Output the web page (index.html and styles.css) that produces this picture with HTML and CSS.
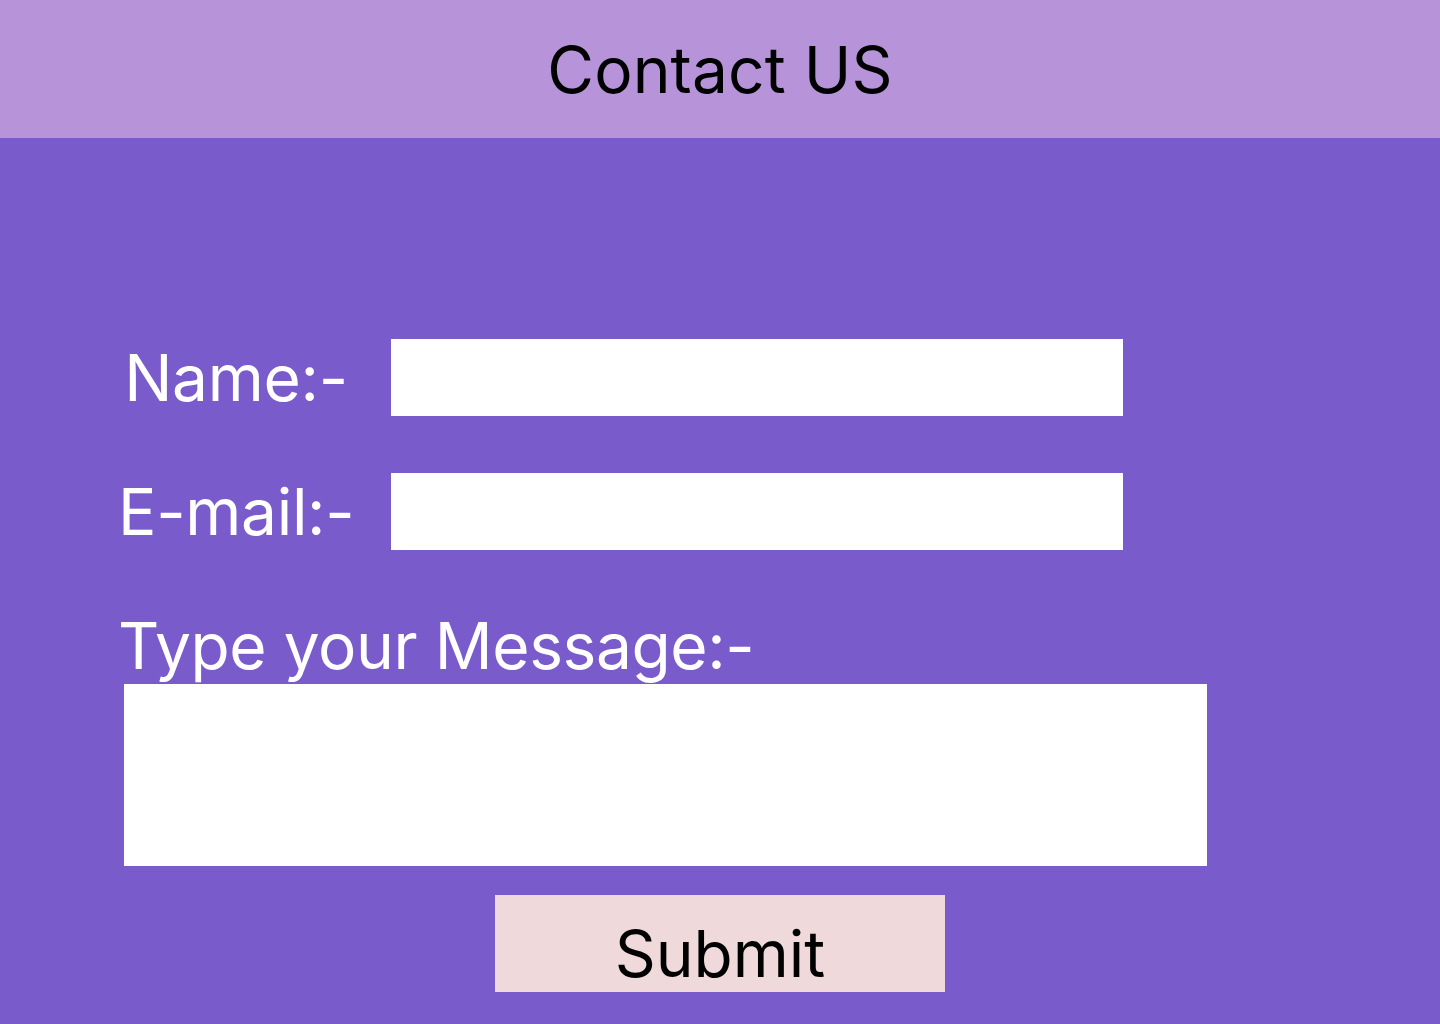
FILE: index.html
```html
<!DOCTYPE html>
<html lang="en">
<head>
<meta charset="utf-8">
<title>Contact US</title>
<link rel="stylesheet" href="styles.css">
</head>
<body>
<header class="top-bar">
  <h1 class="title">Contact US</h1>
</header>
<main class="contact">
  <form class="contact-form" onsubmit="return false;">
    <div class="fields">
      <label class="field-label" for="name">Name:-</label>
      <input class="field-input" id="name" type="text">
      <label class="field-label" for="email">E-mail:-</label>
      <input class="field-input" id="email" type="email">
    </div>
    <label class="message-label" for="msg">Type your Message:-</label>
    <textarea class="message-box" id="msg"></textarea>
    <button class="submit-btn" type="submit">Submit</button>
  </form>
</main>
</body>
</html>
```

FILE: styles.css
```css
html, body {
  margin: 0;
  padding: 0;
}
body {
  background: #7a5bcb;
  font-family: Inter, "Noto Sans", sans-serif;
  min-height: 1024px;
}
.top-bar {
  background: #b794d9;
  height: 138px;
  box-sizing: border-box;
  padding-top: 31px;
}
.title {
  margin: 0;
  font-size: 64px;
  font-weight: 400;
  line-height: normal;
  text-align: center;
  color: #000;
  letter-spacing: 0.1px;
}
.contact {
  padding-top: 201px;
}
.contact-form {
  display: flex;
  flex-direction: column;
  align-items: flex-start;
  padding-left: 118px;
}
.fields {
  display: grid;
  grid-template-columns: 236px 732px;
  column-gap: 37px;
  row-gap: 57px;
}
.field-label {
  font-size: 64px;
  line-height: normal;
  color: #fff;
  text-align: center;
  white-space: nowrap;
  letter-spacing: -0.3px;
}
.field-input {
  height: 77px;
  border: 0;
  margin: 0;
  padding: 0 10px;
  box-sizing: border-box;
  background: #fff;
  font-family: inherit;
  font-size: 32px;
}
.message-label {
  margin-top: 58px;
  font-size: 64px;
  line-height: 76px;
  color: #fff;
  letter-spacing: -0.4px;
}
.message-box {
  margin: 0 0 0 6px;
  width: 1083px;
  height: 182px;
  border: 0;
  padding: 0;
  box-sizing: border-box;
  background: #fff;
  resize: none;
  font-family: inherit;
  display: block;
}
.submit-btn {
  align-self: center;
  margin: 29px 0 0 -118px;
  width: 450px;
  height: 97px;
  border: 0;
  padding: 20px 0 0;
  box-sizing: border-box;
  background: #f0d9da;
  color: #000;
  font-family: inherit;
  font-size: 64px;
  line-height: normal;
  display: flex;
  justify-content: center;
  align-items: flex-start;
}
```
